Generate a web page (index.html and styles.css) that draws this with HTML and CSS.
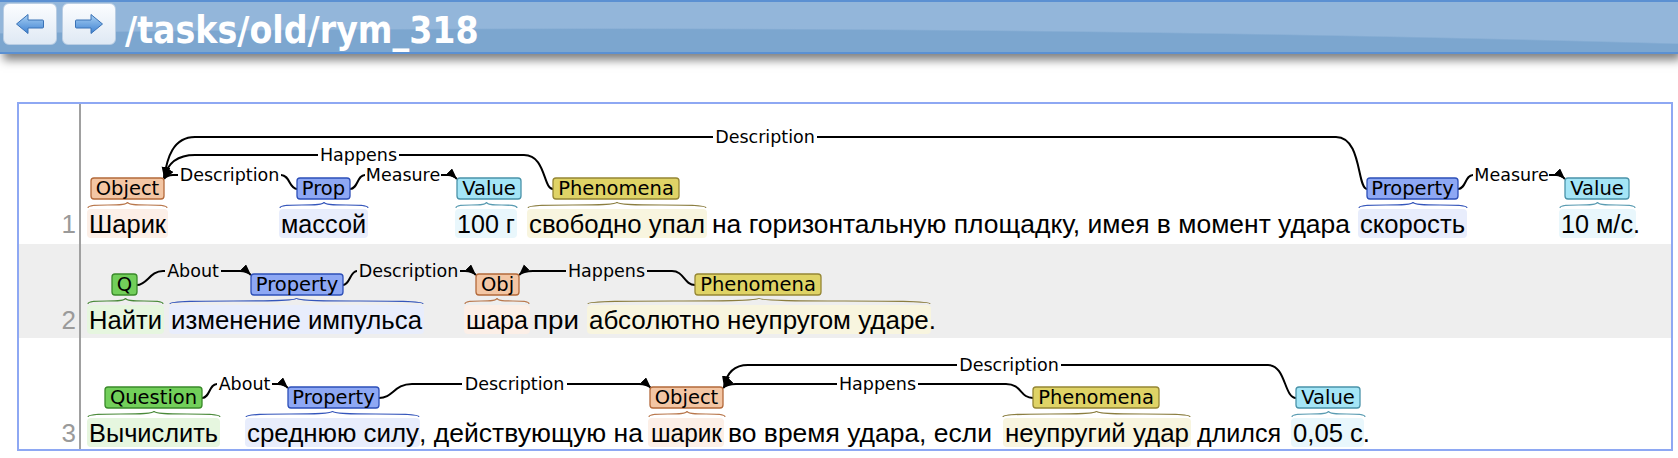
FILE: index.html
```html
<!DOCTYPE html>
<html lang="ru">
<head>
<meta charset="utf-8">
<title>/tasks/old/rym_318</title>
<link rel="stylesheet" href="styles.css">
</head>
<body>
<header class="topbar">
  <button class="navbtn" aria-label="Back">
    <svg class="navicon" width="30" height="22" viewBox="0 0 30 22">
      <defs><linearGradient id="gBack" x1="0" y1="0" x2="0" y2="1"><stop offset="0" stop-color="#a8d0f3"/><stop offset="1" stop-color="#3f82d2"/></linearGradient></defs>
      <path d="M1.5,11 L13,1.5 L13,7 L27.5,7 Q28.5,7 28.5,8 L28.5,14 Q28.5,15 27.5,15 L13,15 L13,20.5 Z" fill="url(#gBack)" stroke="#3a72b6" stroke-width="1" stroke-linejoin="round"/>
    </svg>
  </button>
  <button class="navbtn" aria-label="Forward">
    <svg class="navicon" width="30" height="22" viewBox="0 0 30 22">
      <defs><linearGradient id="gFwd" x1="0" y1="0" x2="0" y2="1"><stop offset="0" stop-color="#a8d0f3"/><stop offset="1" stop-color="#3f82d2"/></linearGradient></defs>
      <path d="M28.5,11 L17,1.5 L17,7 L2.5,7 Q1.5,7 1.5,8 L1.5,14 Q1.5,15 2.5,15 L17,15 L17,20.5 Z" fill="url(#gFwd)" stroke="#3a72b6" stroke-width="1" stroke-linejoin="round"/>
    </svg>
  </button>
  <h1 class="doc-title">/tasks/old/rym_318</h1>
</header>

<main class="doc">
  <div class="sent">
    <div class="num num1">1</div>
    <svg class="ann" width="1590" height="140" viewBox="81 104 1590 140">
      <defs><marker id="a1" markerUnits="userSpaceOnUse" markerWidth="12" markerHeight="9" refX="11" refY="4" orient="auto"><path d="M0,0 L11,4 L0,8 Z"/></marker></defs>
      <rect class="hl h-obj" x="87" y="209" width="81" height="29" rx="4"/>
      <rect class="hl h-prop" x="279" y="209" width="89" height="29" rx="4"/>
      <rect class="hl h-val" x="455" y="209" width="62" height="29" rx="4"/>
      <rect class="hl h-phen" x="527" y="209" width="180" height="29" rx="4"/>
      <rect class="hl h-prop" x="1358" y="209" width="109" height="29" rx="4"/>
      <rect class="hl h-val" x="1559" y="209" width="77" height="29" rx="4"/>
      <text class="t" x="89" y="233" textLength="77" lengthAdjust="spacingAndGlyphs">Шарик</text>
      <text class="t" x="281" y="233" textLength="85" lengthAdjust="spacingAndGlyphs">массой</text>
      <text class="t" x="457" y="233" textLength="58" lengthAdjust="spacingAndGlyphs">100 г</text>
      <text class="t" x="529" y="233" textLength="176" lengthAdjust="spacingAndGlyphs">свободно упал</text>
      <text class="t" x="712" y="233" textLength="638" lengthAdjust="spacingAndGlyphs">на горизонтальную площадку, имея в момент удара</text>
      <text class="t" x="1360" y="233" textLength="105" lengthAdjust="spacingAndGlyphs">скорость</text>
      <text class="t" x="1561" y="233" textLength="79" lengthAdjust="spacingAndGlyphs">10 м/с.</text>
      <path class="cb c-obj" d="M88,208 C88,202 127.5,208 127.5,202 C127.5,208 167,202 167,208"/>
      <path class="cb c-prop" d="M280,208 C280,202 324,208 324,202 C324,208 368,202 368,208"/>
      <path class="cb c-val" d="M456,208 C456,202 486.5,208 486.5,202 C486.5,208 517,202 517,208"/>
      <path class="cb c-phen" d="M528,208 C528,202 617,208 617,202 C617,208 706,202 706,208"/>
      <path class="cb c-prop" d="M1359,208 C1359,202 1413,208 1413,202 C1413,208 1467,202 1467,208"/>
      <path class="cb c-val" d="M1560,208 C1560,202 1597.5,208 1597.5,202 C1597.5,208 1635,202 1635,208"/>
      <path class="arc" d="M297,189 C289,189 290,175 281,175"/>
      <path class="arc" d="M178,175 L173,175 C169,175 166,176 164,179" marker-end="url(#a1)"/>
      <path class="arc" d="M350,189 C358,189 357,175 365,175"/>
      <path class="arc" d="M441,175 L448,175 C452,175 454,176 457,179" marker-end="url(#a1)"/>
      <path class="arc" d="M553,189 C543,189 546,155 524,155 L399,155"/>
      <path class="arc" d="M318,155 L195,155 C175,155 167,165 164,178" marker-end="url(#a1)"/>
      <path class="arc" d="M1367,189 C1357,189 1362,137 1336,137 L817,137"/>
      <path class="arc" d="M713,137 L195,137 C173,137 167,158 164,178" marker-end="url(#a1)"/>
      <path class="arc" d="M1458,189 C1466,189 1465,175 1473,175"/>
      <path class="arc" d="M1549,175 L1556,175 C1560,175 1562,176 1565,179" marker-end="url(#a1)"/>
      <text class="at" x="229.5" y="181">Description</text>
      <text class="at" x="403" y="181">Measure</text>
      <text class="at" x="358.5" y="161">Happens</text>
      <text class="at" x="765" y="143">Description</text>
      <text class="at" x="1511.5" y="181">Measure</text>
      <rect class="lb l-obj" x="91" y="178" width="73" height="21" rx="3"/>
      <text class="lt" x="127.5" y="195">Object</text>
      <rect class="lb l-prop" x="297" y="178" width="53" height="21" rx="3"/>
      <text class="lt" x="323.5" y="195">Prop</text>
      <rect class="lb l-val" x="457" y="178" width="64" height="21" rx="3"/>
      <text class="lt" x="489" y="195">Value</text>
      <rect class="lb l-phen" x="553" y="178" width="126" height="21" rx="3"/>
      <text class="lt" x="616" y="195">Phenomena</text>
      <rect class="lb l-prop" x="1367" y="178" width="91" height="21" rx="3"/>
      <text class="lt" x="1412.5" y="195">Property</text>
      <rect class="lb l-val" x="1565" y="178" width="64" height="21" rx="3"/>
      <text class="lt" x="1597" y="195">Value</text>
    </svg>
  </div>

  <div class="sent alt">
    <div class="num num2">2</div>
    <svg class="ann" width="1590" height="94" viewBox="81 244 1590 94">
      <defs><marker id="a2" markerUnits="userSpaceOnUse" markerWidth="12" markerHeight="9" refX="11" refY="4" orient="auto"><path d="M0,0 L11,4 L0,8 Z"/></marker></defs>
      <rect class="hl h-q" x="87" y="305" width="77" height="29" rx="4"/>
      <rect class="hl h-prop" x="169" y="305" width="255" height="29" rx="4"/>
      <rect class="hl h-obj" x="464" y="305" width="66" height="29" rx="4"/>
      <rect class="hl h-phen" x="587" y="305" width="344" height="29" rx="4"/>
      <text class="t" x="89" y="329" textLength="73" lengthAdjust="spacingAndGlyphs">Найти</text>
      <text class="t" x="171" y="329" textLength="251" lengthAdjust="spacingAndGlyphs">изменение импульса</text>
      <text class="t" x="466" y="329" textLength="62" lengthAdjust="spacingAndGlyphs">шара</text>
      <text class="t" x="533" y="329" textLength="46" lengthAdjust="spacingAndGlyphs">при</text>
      <text class="t" x="589" y="329" textLength="347" lengthAdjust="spacingAndGlyphs">абсолютно неупругом ударе.</text>
      <path class="cb c-q" d="M88,304 C88,298 125.5,304 125.5,298 C125.5,304 163,298 163,304"/>
      <path class="cb c-prop" d="M170,304 C170,298 296.5,304 296.5,298 C296.5,304 423,298 423,304"/>
      <path class="cb c-obj" d="M465,304 C465,298 497,304 497,298 C497,304 529,298 529,304"/>
      <path class="cb c-phen" d="M588,304 C588,298 759,304 759,298 C759,304 930,298 930,304"/>
      <path class="arc" d="M137,285 C147,285 150,271 163,271 L165,271"/>
      <path class="arc" d="M221,271 L240,271 C245,271 248,272 251,275" marker-end="url(#a2)"/>
      <path class="arc" d="M343,285 C350,285 350,271 357,271"/>
      <path class="arc" d="M460,271 L465,271 C470,271 473,272 476,275" marker-end="url(#a2)"/>
      <path class="arc" d="M695,285 C684,285 684,271 672,271 L647,271"/>
      <path class="arc" d="M566,271 L533,271 C527,271 522,272 519,275" marker-end="url(#a2)"/>
      <text class="at" x="193" y="277">About</text>
      <text class="at" x="408.5" y="277">Description</text>
      <text class="at" x="606.5" y="277">Happens</text>
      <rect class="lb l-q" x="112" y="274" width="25" height="21" rx="3"/>
      <text class="lt" x="124.5" y="291">Q</text>
      <rect class="lb l-prop" x="251" y="274" width="92" height="21" rx="3"/>
      <text class="lt" x="297" y="291">Property</text>
      <rect class="lb l-obj" x="476" y="274" width="43" height="21" rx="3"/>
      <text class="lt" x="497.5" y="291">Obj</text>
      <rect class="lb l-phen" x="695" y="274" width="126" height="21" rx="3"/>
      <text class="lt" x="758" y="291">Phenomena</text>
    </svg>
  </div>

  <div class="sent">
    <div class="num num3">3</div>
    <svg class="ann" width="1590" height="111" viewBox="81 338 1590 111">
      <defs><marker id="a3" markerUnits="userSpaceOnUse" markerWidth="12" markerHeight="9" refX="11" refY="4" orient="auto"><path d="M0,0 L11,4 L0,8 Z"/></marker></defs>
      <rect class="hl h-q" x="87" y="418" width="133" height="29" rx="4"/>
      <rect class="hl h-prop" x="245" y="418" width="175" height="29" rx="4"/>
      <rect class="hl h-obj" x="648" y="418" width="76" height="29" rx="4"/>
      <rect class="hl h-phen" x="1003" y="418" width="188" height="29" rx="4"/>
      <rect class="hl h-val" x="1291" y="418" width="73" height="29" rx="4"/>
      <text class="t" x="89" y="442" textLength="129" lengthAdjust="spacingAndGlyphs">Вычислить</text>
      <text class="t" x="247" y="442" textLength="172" lengthAdjust="spacingAndGlyphs">среднюю силу</text>
      <text class="t" x="419" y="442" textLength="224" lengthAdjust="spacingAndGlyphs">, действующую на</text>
      <text class="t" x="651" y="442" textLength="71" lengthAdjust="spacingAndGlyphs">шарик</text>
      <text class="t" x="728" y="442" textLength="264" lengthAdjust="spacingAndGlyphs">во время удара, если</text>
      <text class="t" x="1005" y="442" textLength="184" lengthAdjust="spacingAndGlyphs">неупругий удар</text>
      <text class="t" x="1197" y="442" textLength="84" lengthAdjust="spacingAndGlyphs">длился</text>
      <text class="t" x="1293" y="442" textLength="77" lengthAdjust="spacingAndGlyphs">0,05 с.</text>
      <path class="cb c-q" d="M88,417 C88,411 154,417 154,411 C154,417 220,411 220,417"/>
      <path class="cb c-prop" d="M246,417 C246,411 332.5,417 332.5,411 C332.5,417 419,411 419,417"/>
      <path class="cb c-obj" d="M649,417 C649,411 687,417 687,411 C687,417 725,411 725,417"/>
      <path class="cb c-phen" d="M1003,417 C1003,411 1096.5,417 1096.5,411 C1096.5,417 1190,411 1190,417"/>
      <path class="cb c-val" d="M1292,417 C1292,411 1328.5,417 1328.5,411 C1328.5,417 1365,411 1365,417"/>
      <path class="arc" d="M202,398 C210,398 209,384 217,384"/>
      <path class="arc" d="M272,384 L278,384 C283,384 285,385 288,388" marker-end="url(#a3)"/>
      <path class="arc" d="M379,398 C393,398 394,384 412,384 L462,384"/>
      <path class="arc" d="M567,384 L639,384 C645,384 648,385 651,388" marker-end="url(#a3)"/>
      <path class="arc" d="M1033,398 C1020,398 1022,384 1006,384 L918,384"/>
      <path class="arc" d="M837,384 L736,384 C730,384 726,385 723,388" marker-end="url(#a3)"/>
      <path class="arc" d="M1296,398 C1284,398 1286,365 1268,365 L1061,365"/>
      <path class="arc" d="M957,365 L748,365 C732,365 726,376 724,387" marker-end="url(#a3)"/>
      <text class="at" x="244.5" y="390">About</text>
      <text class="at" x="514.5" y="390">Description</text>
      <text class="at" x="877.5" y="390">Happens</text>
      <text class="at" x="1009" y="371">Description</text>
      <rect class="lb l-q" x="105" y="387" width="97" height="21" rx="3"/>
      <text class="lt" x="153.5" y="404">Question</text>
      <rect class="lb l-prop" x="288" y="387" width="91" height="21" rx="3"/>
      <text class="lt" x="333.5" y="404">Property</text>
      <rect class="lb l-obj" x="650" y="387" width="73" height="21" rx="3"/>
      <text class="lt" x="686.5" y="404">Object</text>
      <rect class="lb l-phen" x="1033" y="387" width="126" height="21" rx="3"/>
      <text class="lt" x="1096" y="404">Phenomena</text>
      <rect class="lb l-val" x="1296" y="387" width="64" height="21" rx="3"/>
      <text class="lt" x="1328" y="404">Value</text>
    </svg>
  </div>
</main>
</body>
</html>
```

FILE: styles.css
```css
html, body {
  margin: 0;
  padding: 0;
  background: #ffffff;
}

body {
  width: 1678px;
  height: 458px;
  overflow: hidden;
  font-family: "Liberation Sans", Arial, sans-serif;
}

/* ---------- top bar ---------- */
.topbar {
  position: relative;
  z-index: 1;
  display: flex;
  align-items: flex-start;
  gap: 5px;
  height: 50px;
  padding-left: 3px;
  border-top: 2px solid #5b90d2;
  border-bottom: 2px solid #5b90d2;
  background: radial-gradient(3875px 380px at 600px 406px, #7ca6cf 99.6%, #93b6da 100%);
  box-shadow: 3px 6px 9px rgba(0, 0, 0, 0.5);
}

.navbtn {
  margin-top: 1px;
  width: 54px;
  height: 42px;
  padding: 0;
  border: 1px solid #b9cde3;
  border-radius: 6px;
  background: linear-gradient(#fbfdff, #dfe9f4);
  display: flex;
  align-items: center;
  justify-content: center;
}

.navicon {
  display: block;
}

.doc-title {
  margin: 10px 0 0 4px;
  font-family: "DejaVu Sans Condensed", "DejaVu Sans", sans-serif;
  font-stretch: condensed;
  font-weight: bold;
  font-size: 37px;
  line-height: 37px;
  color: #ffffff;
  white-space: nowrap;
}

/* ---------- document ---------- */
.doc {
  display: block;
  box-sizing: border-box;
  width: 1656px;
  margin: 48px 0 0 17px;
  border: 2px solid #8ea8f3;
}

.sent {
  display: grid;
  grid-template-columns: 62px 1590px;
}

.sent.alt {
  background: #eeeeee;
}

.num {
  box-sizing: border-box;
  border-right: 2px solid #a0a0a0;
  display: flex;
  align-items: flex-end;
  justify-content: flex-end;
  padding-right: 3px;
  color: #9a9a9a;
  font-family: "Liberation Sans", Arial, sans-serif;
  font-size: 26px;
  line-height: 26px;
}

.num1 { padding-bottom: 7px; }
.num2 { padding-bottom: 5px; }
.num3 { padding-bottom: 3px; }

.ann {
  display: block;
}

/* text */
.t {
  font-family: "Liberation Sans", Arial, sans-serif;
  font-size: 26.5px;
  fill: #000000;
}

.lt {
  font-family: "DejaVu Sans", Verdana, sans-serif;
  font-size: 19.5px;
  text-anchor: middle;
  fill: #000000;
}

.at {
  font-family: "DejaVu Sans", Verdana, sans-serif;
  font-size: 17.5px;
  text-anchor: middle;
  fill: #000000;
}

.arc {
  fill: none;
  stroke: #000000;
  stroke-width: 2;
}

marker path {
  fill: #000000;
}

.cb {
  fill: none;
  stroke-width: 1.2;
}

.lb {
  stroke-width: 1.3;
}

/* entity colours */
.l-obj  { fill: #f3c6a4; stroke: #b3693a; }
.l-prop { fill: #8ea8f4; stroke: #2d4fb8; }
.l-val  { fill: #a4e5f6; stroke: #4a93a9; }
.l-phen { fill: #dfd366; stroke: #958634; }
.l-q    { fill: #72cf5a; stroke: #3a8a2a; }

.h-obj  { fill: #fcefe7; }
.h-prop { fill: #e8edfc; }
.h-val  { fill: #e9f7fc; }
.h-phen { fill: #f8f5df; }
.h-q    { fill: #e6f6df; }

.c-obj  { stroke: #b9784d; }
.c-prop { stroke: #3556bb; }
.c-val  { stroke: #5a9cb2; }
.c-phen { stroke: #8b7e40; }
.c-q    { stroke: #4a8a3a; }
```
